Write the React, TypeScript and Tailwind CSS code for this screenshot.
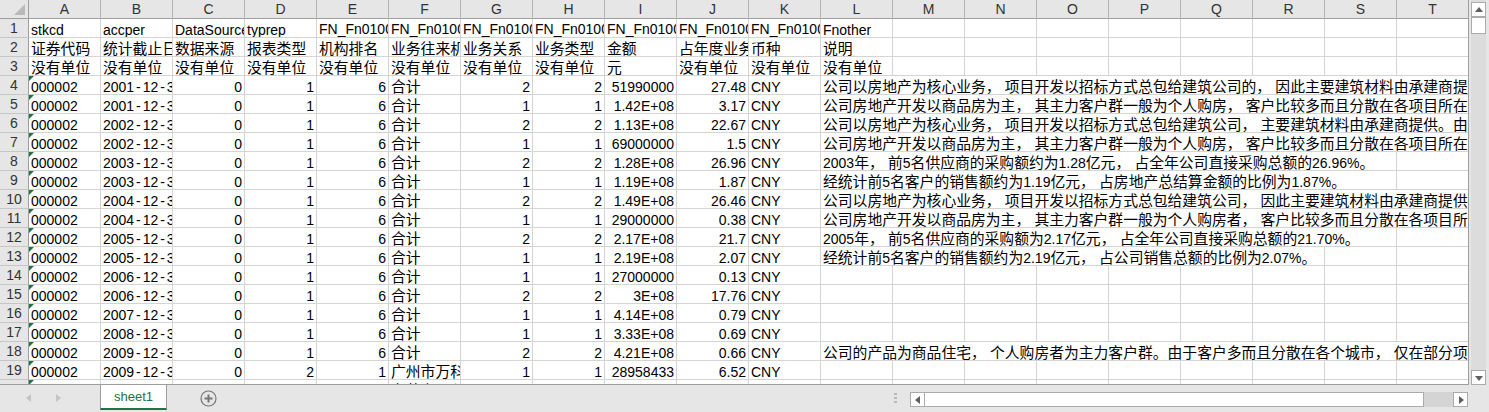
// App.tsx - spreadsheet view
import React from 'react'

const COLS = 'ABCDEFGHIJKLMNOPQRST'.split('')

const FONT = "font-['Liberation_Sans','Noto_Sans_CJK_SC',sans-serif]"

const HEAD_ROWS = [
  ['stkcd', 'accper', 'DataSource', 'typrep', 'FN_Fn01001', 'FN_Fn01002', 'FN_Fn01003', 'FN_Fn01004', 'FN_Fn01005', 'FN_Fn01006', 'FN_Fn01007', 'Fnother'],
  ['证券代码', '统计截止日期', '数据来源', '报表类型', '机构排名', '业务往来机构', '业务关系', '业务类型', '金额', '占年度业务比例', '币种', '说明'],
  ['没有单位', '没有单位', '没有单位', '没有单位', '没有单位', '没有单位', '没有单位', '没有单位', '元', '没有单位', '没有单位', '没有单位'],
]

const SUPPLY_A = '公司以房地产为核心业务，项目开发以招标方式总包给建筑公司的，因此主要建筑材料由承建商提供。'
const SUPPLY_B = '公司以房地产为核心业务，项目开发以招标方式总包给建筑公司，主要建筑材料由承建商提供。由于'
const SUPPLY_C = '公司以房地产为核心业务，项目开发以招标方式总包给建筑公司，因此主要建筑材料由承建商提供。'
const CLIENT_A = '公司房地产开发以商品房为主，其主力客户群一般为个人购房，客户比较多而且分散在各项目所在地。'
const CLIENT_B = '公司房地产开发以商品房为主，其主力客户群一般为个人购房者，客户比较多而且分散在各项目所在地。'

interface RowData {
  date: string
  typrep?: number
  rank?: number
  org?: string
  rel: number
  amount: string
  pct: string
  note?: string
  span?: number
}

const ROWS: RowData[] = [
  { date: '2001-12-31', rel: 2, amount: '51990000', pct: '27.48', note: SUPPLY_A, span: 9 },
  { date: '2001-12-31', rel: 1, amount: '1.42E+08', pct: '3.17', note: CLIENT_A, span: 9 },
  { date: '2002-12-31', rel: 2, amount: '1.13E+08', pct: '22.67', note: SUPPLY_B, span: 9 },
  { date: '2002-12-31', rel: 1, amount: '69000000', pct: '1.5', note: CLIENT_A, span: 9 },
  { date: '2003-12-31', rel: 2, amount: '1.28E+08', pct: '26.96', note: '2003年，前5名供应商的采购额约为1.28亿元，占全年公司直接采购总额的26.96%。', span: 8 },
  { date: '2003-12-31', rel: 1, amount: '1.19E+08', pct: '1.87', note: '经统计前5名客户的销售额约为1.19亿元，占房地产总结算金额的比例为1.87%。', span: 8 },
  { date: '2004-12-31', rel: 2, amount: '1.49E+08', pct: '26.46', note: SUPPLY_C, span: 9 },
  { date: '2004-12-31', rel: 1, amount: '29000000', pct: '0.38', note: CLIENT_B, span: 9 },
  { date: '2005-12-31', rel: 2, amount: '2.17E+08', pct: '21.7', note: '2005年，前5名供应商的采购额为2.17亿元，占全年公司直接采购总额的21.70%。', span: 8 },
  { date: '2005-12-31', rel: 1, amount: '2.19E+08', pct: '2.07', note: '经统计前5名客户的销售额约为2.19亿元，占公司销售总额的比例为2.07%。', span: 7 },
  { date: '2006-12-31', rel: 1, amount: '27000000', pct: '0.13' },
  { date: '2006-12-31', rel: 2, amount: '3E+08', pct: '17.76' },
  { date: '2007-12-31', rel: 1, amount: '4.14E+08', pct: '0.79' },
  { date: '2008-12-31', rel: 1, amount: '3.33E+08', pct: '0.69' },
  { date: '2009-12-31', rel: 2, amount: '4.21E+08', pct: '0.66', note: '公司的产品为商品住宅，个人购房者为主力客户群。由于客户多而且分散在各个城市，仅在部分项目中', span: 9 },
  { date: '2009-12-31', typrep: 2, rank: 1, org: '广州市万科房地产有限公司', rel: 1, amount: '28958433', pct: '6.52' },
  { date: '2009-12-31', typrep: 2, rank: 2, org: '东莞市万科房地产有限公司', rel: 1, amount: '25000000', pct: '5.61' },
]

// the sheet's font sets latin, CJK, commas and hyphens at different widths
function Mixed({ text }: { text: string }) {
  const runs = text.match(/，|-|[\x00-\x2c\x2e-\x7f]+|[^\x00-\x7f，]+/g) ?? []
  return (
    <>
      {runs.map((run, i) => {
        if (run === '，') {
          return (
            <span key={i} className="inline-block w-[19px] text-left text-[14.8px]">
              {run}
            </span>
          )
        }
        if (run === '-') {
          return (
            <span key={i} className="inline-block w-[8.5px] text-center text-[14px]">
              {run}
            </span>
          )
        }
        return (
          <span key={i} className={/^[\x00-\x7f]/.test(run) ? 'text-[14px]' : 'text-[14.8px]'}>
            {run}
          </span>
        )
      })}
    </>
  )
}

function Cell({ children, right, flag, span }: { children?: string | number; right?: boolean; flag?: boolean; span?: number }) {
  const spanClass =
    span === 9 ? 'col-span-9' : span === 8 ? 'col-span-8' : span === 7 ? 'col-span-7' : ''
  // underscores sit on the cell's bottom edge, so those cells stay one pixel higher
  const raised = String(children ?? '').includes('_')
  return (
    <div
      className={`relative overflow-hidden whitespace-nowrap border-r border-b border-[#d4d4d4] bg-white px-[2px] leading-[19px] text-black ${raised ? '' : 'pt-px'} ${right ? 'text-right' : 'text-left'} ${spanClass}`}
    >
      {flag && (
        <span className="absolute top-0 left-0 h-0 w-0 border-t-[5px] border-r-[5px] border-t-[#217346] border-r-transparent" />
      )}
      {children !== undefined && <Mixed text={String(children)} />}
    </div>
  )
}

function RowHead({ n }: { n: number }) {
  return (
    <div className="flex items-center justify-center border-r border-b border-r-[#9e9e9e] border-b-[#c6c6c6] bg-[#e6e6e6] text-[14px] leading-none text-[#333333]">
      {n}
    </div>
  )
}

function Blank({ count }: { count: number }) {
  return (
    <>
      {Array.from({ length: count }).map((_, i) => (
        <Cell key={i} />
      ))}
    </>
  )
}

function Arrow({ dir, color = '#5f5f5f' }: { dir: 'up' | 'down' | 'left' | 'right'; color?: string }) {
  const points = {
    up: '4,1 8,6 0,6',
    down: '0,2 8,2 4,7',
    left: '6,0 6,8 1,4',
    right: '2,0 2,8 7,4',
  }[dir]
  return (
    <svg width="8" height="8" viewBox="0 0 8 8">
      <polygon points={points} fill={color} />
    </svg>
  )
}

function ScrollButton({ dir }: { dir: 'up' | 'down' | 'left' | 'right' }) {
  return (
    <div className="flex h-[15px] w-[15px] shrink-0 items-center justify-center border border-[#ababab] bg-white">
      <Arrow dir={dir} />
    </div>
  )
}

export default function App() {
  return (
    <div className={`flex h-[412px] w-[1489px] flex-col overflow-hidden bg-[#e6e6e6] ${FONT}`}>
      <div className="flex h-[385px] shrink-0">
        {/* Sheet */}
        <div className="h-[385px] w-[1469px] shrink-0 overflow-hidden border-r border-b border-[#9e9e9e]">
          <div className="grid w-[1469px] grid-cols-[29px_repeat(20,72px)] auto-rows-[19px]">
            <div className="flex items-end justify-end border-r border-b border-[#9e9e9e] bg-[#e6e6e6] pr-[3px] pb-[3px]">
              <svg width="11" height="11" viewBox="0 0 11 11">
                <polygon points="11,0 11,11 0,11" fill="#b9b9b9" />
              </svg>
            </div>
            {COLS.map((col) => (
              <div
                key={col}
                className="flex items-center justify-center border-r border-b border-r-[#b4b4b4] border-b-[#9e9e9e] bg-[#e6e6e6] text-[14px] leading-none text-[#333333]"
              >
                {col}
              </div>
            ))}

            {HEAD_ROWS.map((row, r) => (
              <React.Fragment key={r}>
                <RowHead n={r + 1} />
                {row.map((text, c) => (
                  <Cell key={c}>{text}</Cell>
                ))}
                <Blank count={8} />
              </React.Fragment>
            ))}

            {ROWS.map((row, r) => (
              <React.Fragment key={r}>
                <RowHead n={r + 4} />
                <Cell flag>000002</Cell>
                <Cell>{row.date}</Cell>
                <Cell right>0</Cell>
                <Cell right>{row.typrep ?? 1}</Cell>
                <Cell right>{row.rank ?? 6}</Cell>
                <Cell>{row.org ?? '合计'}</Cell>
                <Cell right>{row.rel}</Cell>
                <Cell right>{row.rel}</Cell>
                <Cell right>{row.amount}</Cell>
                <Cell right>{row.pct}</Cell>
                <Cell>CNY</Cell>
                {row.note ? <Cell span={row.span}>{row.note}</Cell> : <Cell />}
                <Blank count={row.note ? 9 - (row.span ?? 9) : 8} />
              </React.Fragment>
            ))}
          </div>
        </div>

        {/* Vertical scrollbar */}
        <div className="ml-[2px] flex h-[385px] w-[15px] flex-col bg-[#dcdcdc] pt-[2px]">
          <ScrollButton dir="up" />
          <div className="h-[17px] w-[15px] border border-[#ababab] bg-white" />
          <div className="flex-1" />
          <ScrollButton dir="down" />
        </div>
      </div>

      {/* Tab bar */}
      <div className="flex flex-1 items-start">
        <div className="flex h-[26px] w-[100px] shrink-0 items-center gap-[21px] pl-[25px]">
          <Arrow dir="left" color="#c4c4c4" />
          <Arrow dir="right" color="#c4c4c4" />
        </div>
        <div className="flex h-[25px] w-[67px] shrink-0 items-center justify-center border-x border-b-2 border-x-[#9e9e9e] border-b-[#217346] bg-white text-[13px] leading-none text-[#217346]">
          sheet1
        </div>
        <div className="ml-[33px] flex h-[27px] w-[17px] shrink-0 items-center justify-center">
          <svg width="17" height="17" viewBox="0 0 17 17">
            <circle cx="8.5" cy="8.5" r="7.5" fill="none" stroke="#777777" strokeWidth="1.2" />
            <path d="M8.5 4.5v8M4.5 8.5h8" stroke="#777777" strokeWidth="2" />
          </svg>
        </div>
        <div className="ml-[677px] flex h-[26px] w-[16px] shrink-0 flex-col items-start gap-[2px] pt-[8px]">
          <span className="h-[2px] w-[3px] bg-[#b9b9b9]" />
          <span className="h-[2px] w-[3px] bg-[#b9b9b9]" />
          <span className="h-[2px] w-[3px] bg-[#b9b9b9]" />
        </div>
        {/* Horizontal scrollbar */}
        <div className="mt-[7px] flex h-[15px] w-[558px] shrink-0 bg-[#d4d4d4]">
          <ScrollButton dir="left" />
          <div className="h-[15px] w-[499px] border-y border-r border-[#ababab] bg-white" />
          <div className="flex-1" />
          <ScrollButton dir="right" />
        </div>
      </div>
    </div>
  )
}
